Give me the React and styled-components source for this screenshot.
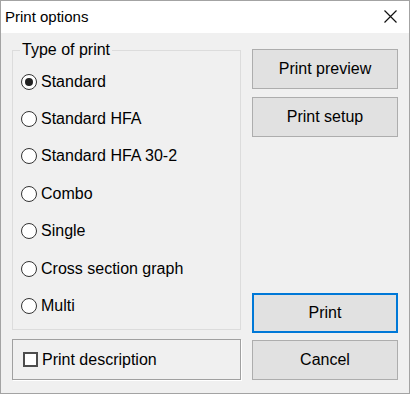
import styled, { createGlobalStyle } from "styled-components"

const GlobalStyle = createGlobalStyle`
    body {
        margin: 0;
        background: #ffffff;
        font-family: "Liberation Sans", Arial, sans-serif;
    }
`;

const Window = styled.div`
    box-sizing: border-box;
    width: 410px;
    height: 394px;
    border: 1px solid #a3a3a3;
    background-color: #f0f0f0;
    display: flex;
    flex-direction: column;
`;

const TitleBar = styled.div`
    height: 32px;
    background-color: #ffffff;
    display: flex;
    align-items: center;
    justify-content: space-between;
    padding-left: 4px;
    padding-right: 12px;
`;

const Title = styled.span`
    font-size: 15px;
    color: #000;
    margin-top: -1px;
`;

const Close = styled.svg`
    width: 13px;
    height: 13px;
    margin-top: -1px;
`;

const Body = styled.div`
    flex: 1;
    display: grid;
    grid-template-columns: 229px 146px;
    grid-template-rows: 292px 41px;
    column-gap: 11px;
    row-gap: 6px;
    padding: 8px 0 0 11px;
`;

const GroupBox = styled.fieldset`
    margin: 0;
    padding: 0 0 0 8px;
    height: 289px;
    box-sizing: border-box;
    border: 1px solid #dcdcdc;
    min-width: 0;
`;

const Legend = styled.legend`
    margin-left: -1px;
    padding: 0 2px;
    font-size: 16px;
    line-height: 18px;
    color: #000;
`;

const OptionList = styled.div`
    display: grid;
    grid-auto-rows: 37.4px;
    padding-top: 4px;
`;

const Option = styled.label`
    display: flex;
    align-items: center;
    font-size: 16px;
    color: #000;
`;

const Radio = styled.span`
    box-sizing: border-box;
    width: 16px;
    height: 16px;
    border: 1px solid #333;
    border-radius: 50%;
    background-color: #fff;
    display: flex;
    align-items: center;
    justify-content: center;
    margin-right: 4px;
    &::after {
        content: "";
        width: 8px;
        height: 8px;
        border-radius: 50%;
        background-color: #222;
        display: ${p => (p.$checked ? "block" : "none")};
    }
`;

const ButtonColumn = styled.div`
    display: flex;
    flex-direction: column;
    gap: 8px;
    padding-top: 8px;
`;

const Button = styled.div`
    box-sizing: border-box;
    height: 40px;
    background-color: #e1e1e1;
    border: ${p => (p.$default ? "2px solid #0078d7" : "1px solid #adadad")};
    display: flex;
    align-items: center;
    justify-content: center;
    font-size: 16px;
    color: #000;
    margin-top: ${p => (p.$push ? "auto" : "0")};
`;

const CancelButton = styled(Button)`
    margin-top: 1px;
`;

const CheckBox = styled.div`
    box-sizing: border-box;
    border: 1px solid #a0a0a0;
    box-shadow: 1px 1px 0 #ffffff;
    display: flex;
    align-items: center;
    padding-left: 10px;
    font-size: 16px;
    color: #000;
`;

const Square = styled.span`
    box-sizing: border-box;
    width: 15px;
    height: 15px;
    border: 2px solid #4d4d4d;
    background-color: #fff;
    margin-right: 4px;
`;

const options = [
    "Standard",
    "Standard HFA",
    "Standard HFA 30-2",
    "Combo",
    "Single",
    "Cross section graph",
    "Multi",
];

export default function App() {
    return (
        <>
            <GlobalStyle />
            <Window>
                <TitleBar>
                    <Title>Print options</Title>
                    <Close viewBox="0 0 13 13">
                        <path d="M0.5 0.5 L12.5 12.5 M12.5 0.5 L0.5 12.5" stroke="#111" strokeWidth="1.2" fill="none" />
                    </Close>
                </TitleBar>
                <Body>
                    <GroupBox>
                        <Legend>Type of print</Legend>
                        <OptionList>
                            {options.map((o, i) => (
                                <Option key={o}>
                                    <Radio $checked={i === 0} />
                                    {o}
                                </Option>
                            ))}
                        </OptionList>
                    </GroupBox>
                    <ButtonColumn>
                        <Button>Print preview</Button>
                        <Button>Print setup</Button>
                        <Button $default $push>Print</Button>
                    </ButtonColumn>
                    <CheckBox>
                        <Square />
                        Print description
                    </CheckBox>
                    <CancelButton>Cancel</CancelButton>
                </Body>
            </Window>
        </>
    )
}
